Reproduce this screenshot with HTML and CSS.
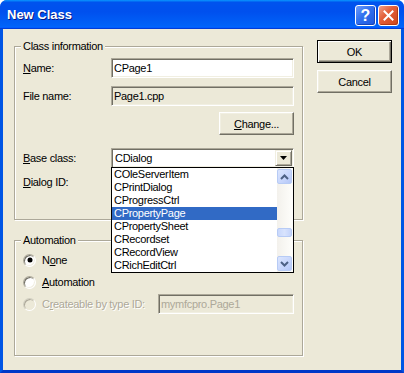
FILE: index.html
```html
<!DOCTYPE html>
<html>
<head>
<meta charset="utf-8">
<link rel="stylesheet" href="styles.css">
</head>
<body>
<div class="window">
  <div class="titlebar">
    <span class="title">New Class</span>
    <div class="tb-buttons">
      <span class="tb-btn help">?</span>
      <span class="tb-btn close"><svg width="11" height="11" viewBox="0 0 11 11"><path d="M1.5 1.5 L9.5 9.5 M9.5 1.5 L1.5 9.5" stroke="#fff" stroke-width="2" stroke-linecap="square"/></svg></span>
    </div>
  </div>
  <div class="frame">
    <div class="client">
      <div class="left">
        <div class="group g1">
          <span class="legend">Class information</span>
          <div class="row"><span class="lbl"><u>N</u>ame:</span><div class="edit">CPage1</div></div>
          <div class="row r-file"><span class="lbl">File name:</span><div class="edit readonly">Page1.cpp</div></div>
          <div class="row r-change"><button class="btn"><span><u>C</u>hange...</span></button></div>
          <div class="row r-base"><span class="lbl"><u>B</u>ase class:</span>
            <div class="combo">
              <span class="combo-text">CDialog</span>
              <span class="combo-btn"><svg width="7" height="4" viewBox="0 0 7 4"><path d="M0 0 H7 L3.5 4 Z" fill="#000"/></svg></span>
              <div class="droplist">
                <div class="items">
                  <div class="item">COleServerItem</div>
                  <div class="item">CPrintDialog</div>
                  <div class="item">CProgressCtrl</div>
                  <div class="item sel">CPropertyPage</div>
                  <div class="item">CPropertySheet</div>
                  <div class="item">CRecordset</div>
                  <div class="item">CRecordView</div>
                  <div class="item">CRichEditCtrl</div>
                </div>
                <div class="scroll">
                  <span class="sbtn up"><svg width="9" height="6" viewBox="0 0 9 6"><path d="M1 5 L4.5 1.5 L8 5" fill="none" stroke="#4D6185" stroke-width="2"/></svg></span>
                  <span class="thumb"></span>
                  <span class="sspace"></span>
                  <span class="sbtn down"><svg width="9" height="6" viewBox="0 0 9 6"><path d="M1 1 L4.5 4.5 L8 1" fill="none" stroke="#4D6185" stroke-width="2"/></svg></span>
                </div>
              </div>
            </div>
          </div>
          <div class="row r-dlg"><span class="lbl"><u>D</u>ialog ID:</span><div class="edit"></div></div>
        </div>
        <div class="group g2">
          <span class="legend">Automation</span>
          <div class="rrow"><span class="radio"><span class="dot"></span></span><span>N<u>o</u>ne</span></div>
          <div class="rrow"><span class="radio"></span><span><u>A</u>utomation</span></div>
          <div class="rrow disabled"><span class="radio"></span><span class="dtext">C<u>r</u>eateable by type ID:</span><div class="edit readonly dedit">mymfcpro.Page1</div></div>
        </div>
      </div>
      <div class="right">
        <button class="btn default"><span>OK</span></button>
        <button class="btn"><span>Cancel</span></button>
      </div>
    </div>
  </div>
</div>
</body>
</html>
```
FILE: styles.css
```css
* { box-sizing: border-box; }
body {
  margin: 0;
  background: #fff;
  font-family: "Liberation Sans", Arial, sans-serif;
  font-size: 11px;
  letter-spacing: -0.3px;
  color: #000;
}
.window {
  width: 404px;
  height: 373px;
  display: flex;
  flex-direction: column;
  border-radius: 7px 7px 0 0;
  overflow: hidden;
  background: #0054E3;
}
.titlebar {
  height: 29px;
  flex: none;
  display: flex;
  align-items: center;
  padding: 2px 5px 0 7px;
  background: linear-gradient(180deg, #0997ff, #0053ee 8%, #0050ee 40%, #0062f8 88%, #0066ff 93%, #005bff 95%, #003dd7 96%, #003dd7);
}
.title {
  flex: 1;
  color: #fff;
  font-weight: bold;
  font-size: 13px;
  letter-spacing: 0;
  text-shadow: 1px 1px 0 #0a1883;
  margin-top: -2px;
}
.tb-buttons { display: flex; gap: 2px; }
.tb-btn {
  width: 21px;
  height: 21px;
  border: 1px solid #fff;
  border-radius: 3px;
  display: flex;
  align-items: center;
  justify-content: center;
}
.help {
  background: linear-gradient(135deg, #6d9bfb 0%, #3070ee 45%, #1f56dc 100%);
  color: #fff;
  font-weight: bold;
  font-size: 16px;
  letter-spacing: 0;
  box-shadow: inset -1px -1px 0 #1a45b8;
}
.close {
  background: linear-gradient(135deg, #f0a088 0%, #e3603a 40%, #cc4418 100%);
  box-shadow: inset -1px -1px 0 #b03a14;
}
.frame {
  flex: 1;
  display: flex;
  border-left: 3px solid #0055e5;
  border-right: 3px solid #0055e5;
  border-bottom: 3px solid #0038c8;
}
.client {
  flex: 1;
  background: #ECE9D8;
  display: flex;
  align-items: flex-start;
  padding: 11px 0 0 11px;
}
.left {
  width: 289px;
  flex: none;
  display: flex;
  flex-direction: column;
  gap: 20px;
  margin-top: 6px;
}
.group {
  position: relative;
  border: 1px solid #ACA899;
  box-shadow: 1px 1px 0 #fff, inset 1px 1px 0 #fff;
}
.legend {
  position: absolute;
  top: -7px;
  left: 6px;
  padding: 0 2px;
  line-height: 13px;
  background: #ECE9D8;
}
.g1 {
  height: 174px;
  padding: 11px 8px 0 8px;
  display: flex;
  flex-direction: column;
}
.row {
  display: flex;
  align-items: center;
  height: 20px;
  flex: none;
}
.lbl { width: 88px; flex: none; }
.r-file { margin-top: 8px; }
.r-change { margin-top: 6px; height: 23px; justify-content: flex-end; }
.r-base { margin-top: 13px; }
.r-dlg { margin-top: 4px; }
.edit {
  width: 183px;
  height: 20px;
  flex: none;
  background: #fff;
  border: 1px solid;
  border-color: #ACA899 #fff #fff #ACA899;
  box-shadow: inset 1px 1px 0 #716F64, inset -1px -1px 0 #F1EFE2;
  padding: 0 2px;
  display: flex;
  align-items: center;
}
.readonly { background: #ECE9D8; }
.btn {
  width: 75px;
  height: 23px;
  flex: none;
  background: #ECE9D8;
  border: 1px solid;
  border-color: #fff #716F64 #716F64 #fff;
  box-shadow: inset -1px -1px 0 #ACA899, inset 1px 1px 0 #F1EFE2;
  font: inherit;
  letter-spacing: inherit;
  color: #000;
  padding: 0;
  display: flex;
  align-items: center;
  justify-content: center;
}
.btn.default {
  border: 1px solid #000;
  box-shadow: inset 1px 1px 0 #fff, inset -1px -1px 0 #716F64, inset -2px -2px 0 #ACA899;
}
.combo {
  position: relative;
  width: 183px;
  height: 20px;
  flex: none;
  background: #fff;
  border: 1px solid;
  border-color: #ACA899 #fff #fff #ACA899;
  box-shadow: inset 1px 1px 0 #716F64, inset -1px -1px 0 #F1EFE2;
  padding: 1px 1px 1px 3px;
  display: flex;
  align-items: center;
}
.combo-text { flex: 1; }
.combo-btn {
  width: 17px;
  height: 16px;
  flex: none;
  background: #ECE9D8;
  border: 1px solid;
  border-color: #F1EFE2 #716F64 #716F64 #F1EFE2;
  box-shadow: inset 1px 1px 0 #fff, inset -1px -1px 0 #ACA899;
  display: flex;
  align-items: center;
  justify-content: center;
}
.droplist {
  position: absolute;
  top: 18px;
  left: -1px;
  width: 183px;
  height: 106px;
  border: 1px solid #000;
  background: #fff;
  display: flex;
  z-index: 5;
}
.items { flex: 1; }
.item {
  height: 13px;
  line-height: 13px;
  padding-left: 2px;
  white-space: nowrap;
}
.item.sel { background: #316AC5; color: #fff; }
.scroll {
  width: 16px;
  flex: none;
  display: flex;
  flex-direction: column;
  background: linear-gradient(90deg, #F3F1EC, #FEFEFB);
}
.sbtn {
  width: 15px;
  height: 15px;
  flex: none;
  border: 1px solid #B7CBF5;
  border-radius: 2px;
  background: linear-gradient(135deg, #DCE6FE 0%, #C6D5FC 60%, #B4C7F7 100%);
  display: flex;
  align-items: center;
  justify-content: center;
}
.sbtn.up { margin-top: 1px; }
.sbtn.down { margin-bottom: 1px; }
.thumb {
  width: 15px;
  height: 9px;
  flex: none;
  margin-top: 44px;
  border: 1px solid #B7CBF5;
  border-radius: 2px;
  background: linear-gradient(90deg, #C9D8FC, #D8E3FD 50%, #C4D4FB);
}
.sspace { flex: 1; }
.g2 {
  height: 116px;
  padding: 9px 8px 0 8px;
  display: flex;
  flex-direction: column;
  gap: 2px;
}
.rrow {
  display: flex;
  align-items: center;
  height: 20px;
  flex: none;
}
.radio {
  width: 13px;
  height: 13px;
  flex: none;
  margin-right: 6px;
  border-radius: 50%;
  border: 1px solid;
  border-color: #ACA899 #fff #fff #ACA899;
  box-shadow: inset 1px 1px 0 #716F64, inset -1px -1px 0 #F1EFE2;
  background: #fff;
  display: flex;
  align-items: center;
  justify-content: center;
}
.dot {
  width: 4px;
  height: 4px;
  border-radius: 50%;
  background: #000;
  box-shadow: 0 0 0 0.5px #000;
}
.disabled .radio { background: #ECE9D8; border-color: #D0CEC0 #fff #fff #D0CEC0; box-shadow: inset 1px 1px 0 #ACA899; }
.dtext { flex: 1; color: #ACA899; text-shadow: 1px 1px 0 #fff; }
.dedit { width: 136px; color: #ACA899; }
.right {
  margin-left: 14px;
  display: flex;
  flex-direction: column;
  gap: 7px;
}
```
